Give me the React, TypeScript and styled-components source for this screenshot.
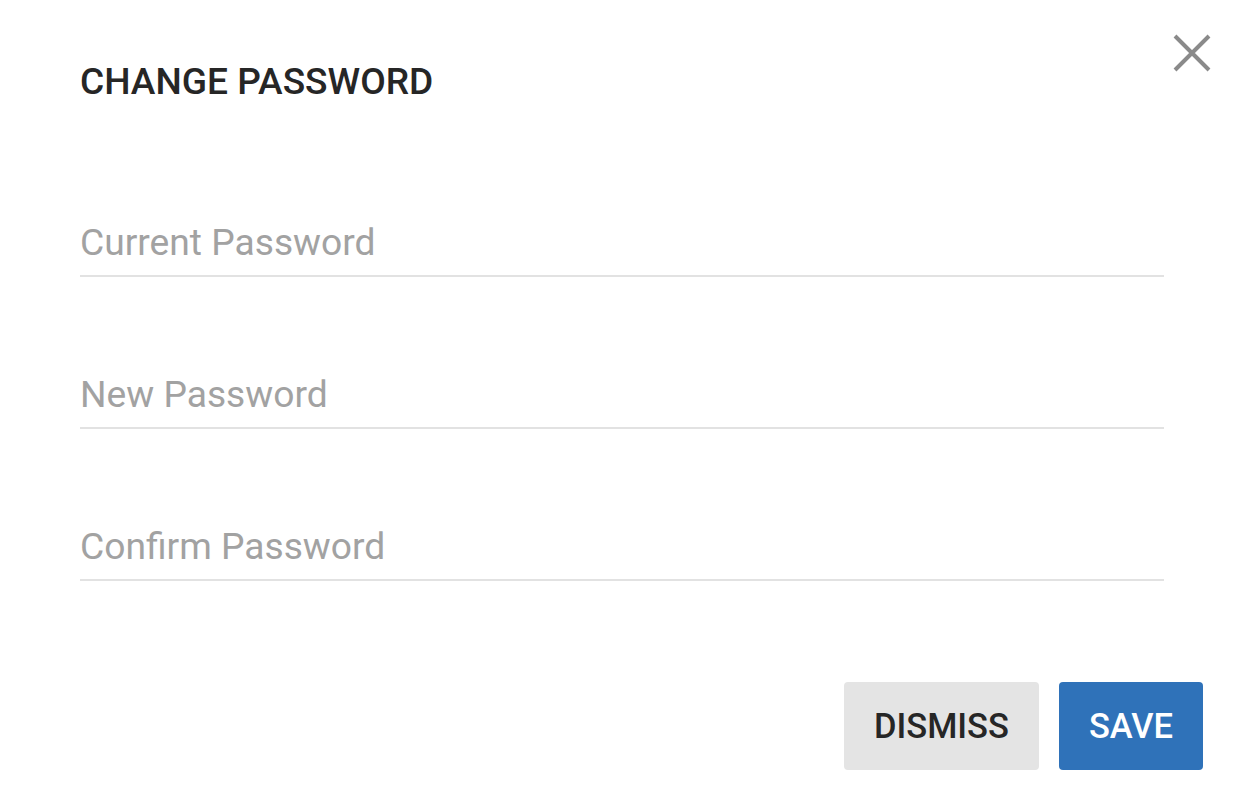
import React, { useState } from 'react';
import { styled, createGlobalStyle } from 'styled-components';

const GlobalStyle = createGlobalStyle`
  html, body {
    margin: 0;
    padding: 0;
    background: #ffffff;
  }
  body {
    font-family: Roboto, "Liberation Sans", Arial, sans-serif;
  }
  * {
    box-sizing: border-box;
  }
`;

interface Field {
  name: string;
  placeholder: string;
}

const fields: Field[] = [
  { name: 'current', placeholder: 'Current Password' },
  { name: 'next', placeholder: 'New Password' },
  { name: 'confirm', placeholder: 'Confirm Password' },
];

const App = () => {
  const [values, setValues] = useState<Record<string, string>>({});

  const handleChange = (name: string, value: string) => {
    setValues((prev) => ({ ...prev, [name]: value }));
  };

  return (
    <>
      <GlobalStyle />
      <Dialog>
        <CloseButton aria-label="Close">
          <svg width="40" height="40" viewBox="0 0 40 40">
            <path d="M3 3 L37 37 M37 3 L3 37" stroke="#8a8a8a" strokeWidth="4" fill="none" />
          </svg>
        </CloseButton>
        <Title>CHANGE PASSWORD</Title>
        <Form>
          {fields.map((f) => (
            <Input
              key={f.name}
              type="password"
              placeholder={f.placeholder}
              value={values[f.name] || ''}
              onChange={(e) => handleChange(f.name, e.target.value)}
            />
          ))}
        </Form>
        <Actions>
          <ActionButton>DISMISS</ActionButton>
          <ActionButton $primary>SAVE</ActionButton>
        </Actions>
      </Dialog>
    </>
  );
};

export default App;

const Dialog = styled.div`
  position: relative;
  width: 1241px;
  height: 805px;
  padding: 60px 38px 0 80px;
  display: flex;
  flex-direction: column;
  background: #ffffff;
`;

const CloseButton = styled.button`
  position: absolute;
  top: 33px;
  right: 29px;
  width: 40px;
  height: 40px;
  padding: 0;
  border: none;
  background: transparent;
  cursor: pointer;
  display: flex;
`;

const Title = styled.h2`
  margin: 0;
  font-size: 37.1px;
  line-height: 44px;
  font-weight: 500;
  color: #262626;
`;

const Form = styled.div`
  display: flex;
  flex-direction: column;
  gap: 95px;
  margin-top: 116px;
  margin-right: 39px;
`;

const Input = styled.input`
  width: 100%;
  height: 57px;
  padding: 0 0 11px 0;
  border: none;
  border-bottom: 2px solid #e2e2e2;
  outline: none;
  background: transparent;
  font-family: Roboto, "Liberation Sans", Arial, sans-serif;
  font-size: 37.2px;
  line-height: 44px;
  color: #222222;

  &::placeholder {
    color: #a2a2a2;
  }
`;

const Actions = styled.div`
  display: flex;
  justify-content: flex-end;
  gap: 20px;
  margin-top: 101px;
`;

const ActionButton = styled.button<{ $primary?: boolean }>`
  height: 88px;
  padding: 0 30px;
  border: none;
  border-radius: 4px;
  font-family: Roboto, "Liberation Sans", Arial, sans-serif;
  font-size: 34.5px;
  font-weight: 500;
  cursor: pointer;
  background: ${(p) => (p.$primary ? '#2f72b9' : '#e4e4e4')};
  color: ${(p) => (p.$primary ? '#ffffff' : '#262626')};
`;
